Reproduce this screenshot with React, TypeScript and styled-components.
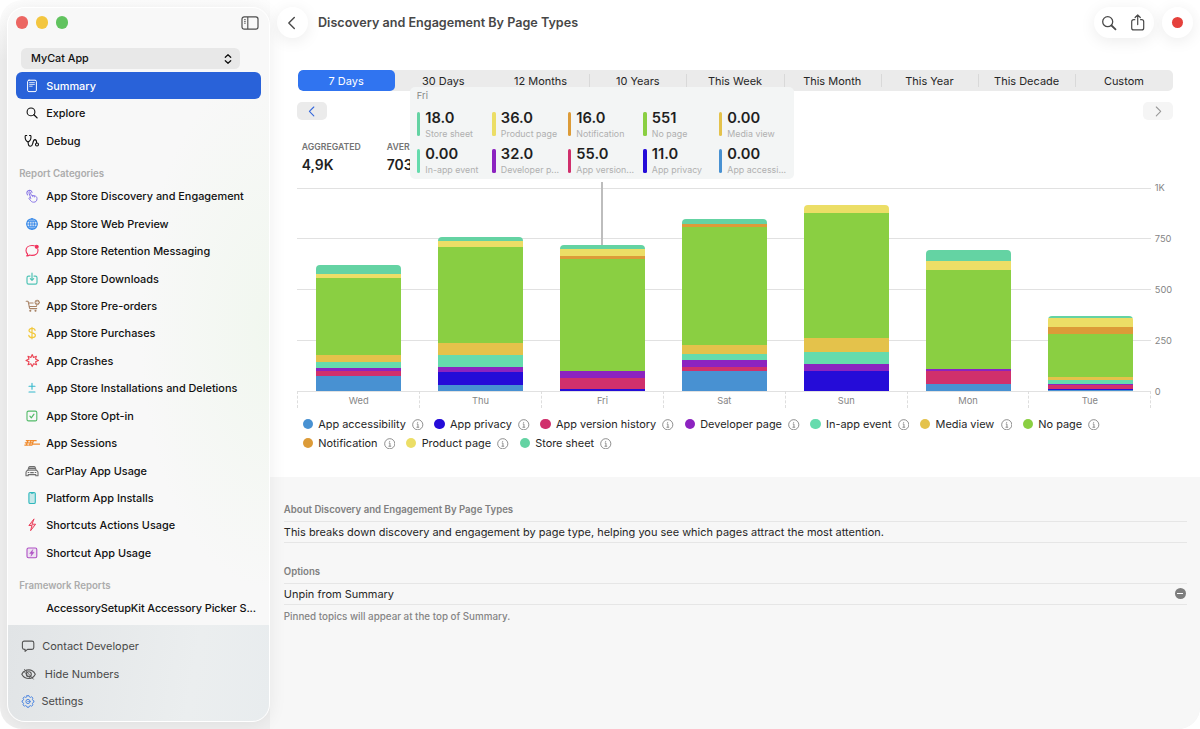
import React from 'react';
import styled, { createGlobalStyle, css } from 'styled-components';

const GlobalStyle = createGlobalStyle`
  * { box-sizing: border-box; }
  html, body { margin: 0; padding: 0; background: #fff; }
  body {
    font-family: Inter, "Liberation Sans", sans-serif;
    font-size: 10.97px;
    color: #262626;
    overflow: hidden;
    -webkit-font-smoothing: antialiased;
  }
`;

/* ---------- data ---------- */

const colors = {
  accessibility: '#4891d2',
  privacy: '#250cd8',
  version: '#d0306c',
  developer: '#8c23c0',
  inApp: '#65dbad',
  media: '#e4c24b',
  noPage: '#8acf42',
  notification: '#dc9b38',
  product: '#ecde66',
  store: '#64d3a3',
};

type Series = keyof typeof colors;

const days: { label: string; parts: [Series, number][] }[] = [
  { label: 'Wed', parts: [['store', 40], ['product', 20], ['noPage', 381], ['media', 33], ['inApp', 30], ['developer', 13], ['version', 26], ['accessibility', 75]] },
  { label: 'Thu', parts: [['store', 18], ['product', 30], ['noPage', 473], ['media', 57], ['inApp', 63], ['developer', 25], ['privacy', 62], ['accessibility', 30]] },
  { label: 'Fri', parts: [['store', 18], ['product', 36], ['notification', 16], ['noPage', 551], ['developer', 32], ['version', 55], ['privacy', 11]] },
  { label: 'Sat', parts: [['store', 22], ['notification', 17], ['noPage', 580], ['media', 43], ['inApp', 30], ['developer', 33], ['version', 21], ['accessibility', 99]] },
  { label: 'Sun', parts: [['product', 41], ['noPage', 613], ['media', 68], ['inApp', 58], ['developer', 34], ['privacy', 101]] },
  { label: 'Mon', parts: [['store', 54], ['product', 45], ['noPage', 487], ['developer', 10], ['version', 66], ['accessibility', 33]] },
  { label: 'Tue', parts: [['store', 14], ['product', 43], ['notification', 32], ['noPage', 213], ['media', 16], ['inApp', 17], ['developer', 9], ['version', 15], ['privacy', 5], ['accessibility', 8]] },
];

const readouts: [string, string, Series][] = [
  ['18.0', 'Store sheet', 'store'],
  ['36.0', 'Product page', 'product'],
  ['16.0', 'Notification', 'notification'],
  ['551', 'No page', 'noPage'],
  ['0.00', 'Media view', 'media'],
  ['0.00', 'In-app event', 'inApp'],
  ['32.0', 'Developer p...', 'developer'],
  ['55.0', 'App version...', 'version'],
  ['11.0', 'App privacy', 'privacy'],
  ['0.00', 'App accessi...', 'accessibility'],
];

const legendRows: [string, Series][][] = [
  [
    ['App accessibility', 'accessibility'],
    ['App privacy', 'privacy'],
    ['App version history', 'version'],
    ['Developer page', 'developer'],
    ['In-app event', 'inApp'],
    ['Media view', 'media'],
    ['No page', 'noPage'],
  ],
  [
    ['Notification', 'notification'],
    ['Product page', 'product'],
    ['Store sheet', 'store'],
  ],
];

const ranges = ['7 Days', '30 Days', '12 Months', '10 Years', 'This Week', 'This Month', 'This Year', 'This Decade', 'Custom'];

/* ---------- icons ---------- */

const Glyph = styled.svg<{ $w?: number }>`
  display: block;
  flex: none;
  width: ${(p) => p.$w ?? 16}px;
  height: 16px;
  fill: none;
  stroke: currentColor;
  stroke-width: 1.1;
  stroke-linecap: round;
  stroke-linejoin: round;
`;

const icons = {
  summary: (
    <Glyph viewBox="0 0 16 16">
      <rect x="3.6" y="2.2" width="8.8" height="11.4" rx="1.4" strokeWidth="1" />
      <path d="M5.6 4.6h4.8M5.6 6.4h4.8M5.6 8.2h2.6" strokeWidth=".8" />
    </Glyph>
  ),
  explore: (
    <Glyph viewBox="0 0 16 16">
      <circle cx="7" cy="6.9" r="3.9" />
      <path d="M9.9 9.8l3.2 3.1" strokeWidth="1.3" />
    </Glyph>
  ),
  debug: (
    <Glyph viewBox="0 0 16 16">
      <path d="M2.7 2.5H1.5c-.5 0-.5 3 .3 4.6C2.4 8.300 3 8.900 4 8.900s1.700-.6 2.300-1.800c.8-1.600.9-4.600.3-4.600H5.500" />
      <path d="M4.100 8.900c0 2.600.7 4.300 2.300 4.300 1.300 0 1.900-.9 2.300-2.600.4-2 .8-4 2.200-4 1.500 0 1.700 1.600 1.700 3.200" />
      <circle cx="13" cy="11.500" r="1.500" />
    </Glyph>
  ),
  tap: (
    <Glyph viewBox="0 0 16 16">
      <path d="M3.700 6.900a2.600 2.600 0 1 1 4.300-2.400" />
      <path d="M6.500 9.500L4.900 4.800c-.3-1 .9-1.400 1.300-.5l1.200 3 3.300.6c1.600.4 2.300 1.200 2.300 2.700 0 2.300-1.200 3.600-3.300 3.600-1.700 0-2.600-.8-3.400-2L5 10.600c-.4-.9.700-1.400 1.500-.4z" strokeWidth="1" />
      <path d="M8.700 7.700v1M10.400 8v1" strokeWidth=".9" />
    </Glyph>
  ),
  globe: (
    <Glyph viewBox="0 0 16 16">
      <circle cx="8" cy="8" r="5.300" fill="currentColor" fillOpacity=".18" />
      <ellipse cx="8" cy="8" rx="2.500" ry="5.300" strokeWidth=".8" />
      <path d="M8 2.700v10.600M2.800 8h10.400M3.500 5.300h9M3.500 10.700h9" strokeWidth=".8" />
    </Glyph>
  ),
  message: (
    <Glyph viewBox="0 0 16 16">
      <path d="M10.300 2.800C9.600 2.600 8.900 2.500 8 2.500 4.500 2.500 2 4.600 2 7.500c0 1.400.6 2.600 1.600 3.500 0 .8-.4 1.400-.9 1.900 1.200.1 2.200-.3 3-.9.700.3 1.500.4 2.300.4 3.500 0 6-2.100 6-4.900 0-.5-.1-.9-.2-1.400" />
      <circle cx="12.700" cy="3.700" r="1.500" fill="currentColor" />
    </Glyph>
  ),
  download: (
    <Glyph viewBox="0 0 16 16">
      <path d="M6 5.100H4.600c-1 0-1.600.6-1.600 1.600v4.900c0 1 .6 1.600 1.600 1.600h6.800c1 0 1.600-.6 1.600-1.600V6.700c0-1-.6-1.600-1.600-1.600H10" strokeWidth="1.200" />
      <path d="M8 2.200v7M6.300 7.700L8 9.400l1.700-1.700" strokeWidth="1.200" />
    </Glyph>
  ),
  cart: (
    <Glyph viewBox="0 0 16 16">
      <path d="M2.200 3.200h1.500c.3 0 .4.100.5.400l1.300 6.200c.1.500.4.800.9.800h6.300M4.500 5h4.600M5.100 8.500h7.200l.4-.9" />
      <circle cx="6.300" cy="12.800" r=".5" fill="currentColor" />
      <circle cx="11.500" cy="12.800" r=".5" fill="currentColor" />
      <circle cx="13.200" cy="4.400" r="2.300" fill="currentColor" strokeWidth=".6" />
      <path d="M13.200 3.100v2.600M11.900 4.400h2.600" stroke="#f8f8f8" strokeWidth=".8" />
    </Glyph>
  ),
  dollar: (
    <Glyph viewBox="0 0 16 16">
      <path d="M11.100 5.400c-.2-1.200-1.400-2-3.100-2-1.800 0-3 .8-3 2.200 0 3.200 6.400 1.300 6.400 4.700 0 1.500-1.300 2.400-3.300 2.400S5 11.800 4.800 10.400M8 2.400v11.400" strokeWidth="1.200" />
    </Glyph>
  ),
  crash: (
    <Glyph viewBox="0 0 16 16">
      <path d="M8.200 1.600l1.300 2.800 2.900-1.200-.9 2.900 3 1.400-2.900 1.300 1 3-3-1.100-1.400 2.900-1.300-2.900-2.900 1.100 1-3-3-1.300L5 6.100l-1-2.900 2.900 1.200z" />
    </Glyph>
  ),
  plusMinus: (
    <Glyph viewBox="0 0 16 16">
      <path d="M8 3.200v6M5 6.200h6M5 12h6" />
    </Glyph>
  ),
  check: (
    <Glyph viewBox="0 0 16 16">
      <rect x="3" y="3.100" width="9.800" height="9.800" rx="1.500" />
      <path d="M5.900 8.200l1.400 1.600 2.700-3.600" strokeWidth="1.200" />
    </Glyph>
  ),
  sessions: (
    <Glyph viewBox="0 0 16 16">
      <path d="M2.300 5.700h2.600M1.300 7.800h3.300M.8 10.100h2.900M6 5.700h2.500M5.600 7.900h2.600M4.800 10.100h3M9 5.700h3.200M8.800 9.200h7M3.900 5.700l-1.600 4.400M7 5.700l-1.400 4.400M9.400 5.700L8 10.100" strokeWidth="1.200" />
    </Glyph>
  ),
  car: (
    <Glyph viewBox="0 0 16 16">
      <path d="M3.900 7.200l.9-2.800c.2-.6.600-.9 1.200-.9h4c.6 0 1 .3 1.200.9l.9 2.800c1.300.4 1.900 1.200 1.900 2.400v3.200h-2.200v-1.200H4.200v1.200H2V9.600c0-1.200.6-2 1.900-2.400z" />
      <path d="M4.100 7.200h7.800" strokeWidth="1" />
      <path d="M5.600 5.400h4.800" strokeWidth="1.800" />
      <path d="M4.200 9.500h.6M11.200 9.500h.6M6.700 9.700h2.600" strokeWidth="1.200" />
    </Glyph>
  ),
  phone: (
    <Glyph viewBox="0 0 16 16">
      <rect x="4.900" y="2.500" width="6.400" height="11" rx="1.300" fill="currentColor" fillOpacity=".25" />
      <path d="M7.300 3.200h1.700" />
    </Glyph>
  ),
  bolt: (
    <Glyph viewBox="0 0 16 16">
      <path d="M9.800 2.200L4.900 8.500h3l-1.300 5.200 5-6.500H8.400z" fill="currentColor" fillOpacity=".25" strokeWidth="1" />
    </Glyph>
  ),
  boltBox: (
    <Glyph viewBox="0 0 16 16">
      <rect x="3" y="3" width="9.800" height="9.800" rx="1.500" fill="currentColor" fillOpacity=".12" />
      <path d="M8.700 4.700L5.600 8.500h2l-.7 2.800 3.200-4H8.200z" fill="currentColor" strokeWidth=".4" />
    </Glyph>
  ),
  bubble: (
    <Glyph viewBox="0 0 16 16">
      <path d="M4.200 3.100h7.800c1.100 0 1.800.7 1.800 1.800v4.700c0 1.100-.7 1.800-1.800 1.800H7.500l-2.400 2v-2h-.9c-1.100 0-1.800-.7-1.800-1.800V4.900c0-1.100.7-1.800 1.800-1.800z" />
    </Glyph>
  ),
  eyeOff: (
    <Glyph viewBox="0 0 16 16">
      <path d="M1.800 8.200C3.200 5.600 5.800 3.900 8.900 3.900s5 1.700 6.400 4.300c-1.400 2.600-3.600 4.300-6.400 4.300S3.200 10.800 1.800 8.200z" />
      <circle cx="8.800" cy="8.200" r="2.500" />
      <path d="M4.500 3.400l8.800 9.700M4.100 5.600l6.600 6.900" strokeWidth=".9" />
    </Glyph>
  ),
  gear: (
    <Glyph viewBox="0 0 16 16">
      <path d="M7 2.700h2l.4 1.200 1.100.5 1.100-.6 1.400 1.400-.6 1.100.5 1.100 1 .4v1.300l-1 .5-.5 1.100.6 1.100-1.400 1.400-1.100-.6-1.100.5-.4 1.100H7l-.4-1.100-1.100-.5-1.100.6L3 11.800l.6-1.100-.5-1.100-1-.5V7.800l1-.4.500-1.100L3 5.200l1.400-1.400 1.100.6 1.100-.5z" strokeWidth="1" />
      <circle cx="8" cy="8.500" r="2.100" strokeWidth="1" />
      <circle cx="8" cy="8.500" r=".3" strokeWidth=".6" />
    </Glyph>
  ),
};

/* ---------- window ---------- */

const Window = styled.div`
  display: flex;
  width: 1200px;
  height: 729px;
  overflow: hidden;
  border-radius: 22px;
  background: linear-gradient(#fdfdfd 0, #fafafa 22px, #efefef 60px);
`;

const Sidebar = styled.aside`
  position: relative;
  z-index: 1;
  display: flex;
  flex-direction: column;
  width: 263px;
  height: 715px;
  margin: 7px 0 0 7px;
  border-radius: 18px;
  border: 1px solid #fff;
  background: radial-gradient(ellipse 130px 260px at 100% 45%, #f1f7ef, #f8f8f8);
  box-shadow: 0 2px 18px rgba(0, 0, 0, 0.07);
  overflow: hidden;
`;

const TitleStrip = styled.div`
  display: flex;
  align-items: center;
  gap: 7.5px;
  height: 29px;
  padding: 0 10px 0 8px;
`;

const Light = styled.span<{ $color: string }>`
  width: 12.4px;
  height: 12.4px;
  border-radius: 50%;
  background: ${(p) => p.$color};
`;

const SidebarToggle = styled.svg`
  width: 18px;
  height: 14px;
  margin-left: auto;
  fill: none;
  stroke: #4d4d4d;
`;

const AppPicker = styled.div`
  display: flex;
  align-items: center;
  justify-content: space-between;
  height: 20.6px;
  margin: 11px 29px 3.4px 13px;
  padding: 1px 6px 0 10px;
  border-radius: 5.5px;
  background: #e8e8e8;
  color: #111;
  font-size: 10.8px;
  font-weight: 450;
`;

const NavItem = styled.div<{ $active?: boolean; $tight?: boolean }>`
  display: flex;
  align-items: center;
  flex: none;
  height: 27.45px;
  margin: 0 8px 0 7.5px;
  padding-left: 8px;
  border-radius: 6px;
  color: #111;
  font-size: 10.9px;
  font-weight: 450;
  letter-spacing: ${(p) => (p.$tight ? '-0.1px' : 'normal')};
  white-space: nowrap;
  ${(p) =>
    p.$active &&
    css`
      background: #2962d9;
      color: #fff;
      font-weight: 500;
    `}
`;

const NavIcon = styled.span<{ $color?: string }>`
  width: 16px;
  margin-right: 6.7px;
  color: ${(p) => p.$color ?? 'inherit'};
`;

const NavHeader = styled.div<{ $h: number }>`
  flex: none;
  height: ${(p) => p.$h}px;
  padding: ${(p) => p.$h - 14.5}px 0 0 11.2px;
  color: #acacac;
  font-size: 9.69px;
  font-weight: 600;
  line-height: 12px;
`;

const SidebarFooter = styled.div`
  display: flex;
  flex-direction: column;
  flex: 1;
  margin-top: 3.2px;
  padding: 7.5px 0 0 12px;
  background: linear-gradient(100deg, #e1e4e6, #ebeeef 70%, #e8ecee);
`;

const FooterItem = styled.div<{ $gap: number; $tint?: string }>`
  display: flex;
  align-items: center;
  gap: ${(p) => p.$gap}px;
  height: 27.7px;
  color: #4a4a4a;
  svg { color: ${(p) => p.$tint ?? '#555'}; }
`;

/* ---------- main column ---------- */

const Main = styled.main`
  display: flex;
  flex-direction: column;
  width: 930px;
`;

const ReportPane = styled.section`
  height: 477px;
  padding: 7px 0 0;
  background: #fff;
`;

const Toolbar = styled.header`
  display: flex;
  align-items: center;
  height: 31px;
  padding: 0 7px;
`;

const ToolGroup = styled.div<{ $w: number }>`
  display: flex;
  align-items: center;
  justify-content: center;
  gap: 11.5px;
  width: ${(p) => p.$w}px;
  height: 31px;
  margin-left: 8.5px;
  border-radius: 16px;
  background: #fff;
  box-shadow: 0 3px 16px rgba(0, 0, 0, 0.08);
  &:first-child { margin-left: 0; }
`;

const ToolIcon = styled.svg`
  width: 18px;
  height: 18px;
  fill: none;
  stroke: #4a4a4a;
  stroke-width: 1.3;
  stroke-linecap: round;
  stroke-linejoin: round;
`;

const RecordDot = styled.span`
  width: 11px;
  height: 11px;
  border-radius: 50%;
  background: #e5413c;
`;

const Title = styled.h1`
  flex: 1;
  margin: 0 0 0 10px;
  color: #474747;
  font-size: 12.6px;
  font-weight: 600;
`;

const Segments = styled.div`
  display: flex;
  height: 20.7px;
  margin: 32.3px 27.5px 0 27.5px;
  border-radius: 5px;
  background: #ebebeb;
  overflow: hidden;
`;

const Segment = styled.div<{ $active?: boolean }>`
  position: relative;
  flex: 1;
  border-radius: ${(p) => (p.$active ? '5px' : 0)};
  background: ${(p) => (p.$active ? '#3074f0' : 'transparent')};
  color: ${(p) => (p.$active ? '#fff' : '#262626')};
  line-height: 23px;
  text-align: center;
  & + & + &::before {
    content: '';
    position: absolute;
    left: 0;
    top: 4px;
    bottom: 4px;
    width: 1px;
    background: #d9d9d9;
  }
`;

const Pager = styled.div`
  display: flex;
  justify-content: space-between;
  padding: 11px 27.5px 0 27.3px;
`;

const PagerButton = styled.div<{ $muted?: boolean }>`
  display: grid;
  place-items: center;
  width: 29.5px;
  height: 18.5px;
  border-radius: 5px;
  background: ${(p) => (p.$muted ? '#f5f5f5' : '#ebebeb')};
  color: ${(p) => (p.$muted ? '#999' : '#3568dc')};
`;

const Stats = styled.div`
  display: flex;
  padding: 21px 0 0 31.8px;
`;

const Stat = styled.div`
  width: 85px;
`;

const StatLabel = styled.div`
  color: #757575;
  font-size: 8.7px;
  font-weight: 600;
  line-height: 12px;
`;

const StatValue = styled.div`
  margin-top: 3px;
  color: #1f1f1f;
  font-size: 13.9px;
  font-weight: 600;
  line-height: 18px;
`;

/* ---------- chart ---------- */

const Chart = styled.div`
  position: relative;
  display: grid;
  grid-template-columns: 854px 1fr;
  grid-template-rows: 203.5px 17px;
  margin: 13.2px 0 0 27.3px;
`;

const GridLines = styled.div`
  grid-area: 1 / 1;
  display: flex;
  flex-direction: column;
  justify-content: space-between;
  height: 204px;
`;

const GridLine = styled.div`
  height: 1px;
  background: #e1e1e1;
`;

const Bars = styled.div`
  grid-area: 1 / 1;
  display: flex;
  align-items: flex-end;
`;

const BarSlot = styled.div`
  display: flex;
  justify-content: center;
  flex: 1;
`;

const Bar = styled.div`
  width: 85.4px;
  border-radius: 4px 4px 0 0;
  overflow: hidden;
`;

const BarPart = styled.div<{ $color: string; $value: number }>`
  height: ${(p) => p.$value * 0.2035}px;
  background: ${(p) => p.$color};
`;

const DayLabels = styled.div`
  grid-area: 2 / 1;
  display: flex;
`;

const DayLabel = styled.div`
  flex: 1;
  border-left: 1px dashed #dedede;
  color: #858585;
  font-size: 9.3px;
  line-height: 20px;
  text-align: center;
  &:last-child { border-right: 1px dashed #dedede; }
`;

const Scale = styled.div`
  grid-area: 1 / 2;
  display: flex;
  flex-direction: column;
  justify-content: space-between;
  height: 216px;
  margin-top: -5.5px;
  padding-left: 3.5px;
  color: #858585;
  font-size: 9.3px;
  line-height: 12px;
`;

const Marker = styled.div`
  position: absolute;
  left: 304.2px;
  top: -6px;
  width: 2px;
  height: 63.5px;
  background: #bdbdbd;
`;

const Tooltip = styled.div`
  position: absolute;
  left: 113px;
  top: -100.7px;
  width: 384px;
  height: 92.2px;
  padding: 3.5px 0 0 6.5px;
  border-radius: 5px;
  background: #f3f5f5;
`;

const TooltipDay = styled.div`
  height: 12px;
  color: #858585;
  font-size: 9.3px;
  line-height: 12px;
`;

const Readouts = styled.div`
  display: grid;
  grid-template-columns: repeat(5, 75.5px);
  row-gap: 7.5px;
  padding-top: 6.5px;
`;

const Readout = styled.div<{ $color: string }>`
  position: relative;
  display: flex;
  flex-direction: column;
  height: 29px;
  padding-left: 8.5px;
  white-space: nowrap;
  &::before {
    content: '';
    position: absolute;
    left: 0;
    top: 3.5px;
    width: 3.5px;
    height: 24px;
    border-radius: 1.5px;
    background: ${(p) => p.$color};
  }
`;

const ReadoutValue = styled.strong`
  color: #1f1f1f;
  font-size: 14.7px;
  font-weight: 600;
  line-height: 19px;
`;

const ReadoutName = styled.span`
  color: #b0b0b0;
  font-size: 8.85px;
  line-height: 12px;
`;

const Legend = styled.div`
  padding: 6.6px 0 0 32.6px;
`;

const LegendRow = styled.div`
  display: flex;
  height: 19px;
`;

const LegendItem = styled.div`
  display: flex;
  align-items: center;
  margin-right: 10.7px;
  font-size: 10.93px;
  white-space: nowrap;
`;

const LegendDot = styled.span<{ $color: string }>`
  width: 10.4px;
  height: 10.4px;
  margin-right: 5.2px;
  border-radius: 50%;
  background: ${(p) => p.$color};
`;

const InfoIcon = styled.svg`
  width: 11.5px;
  height: 11.5px;
  margin-left: 6.3px;
  fill: none;
  stroke: #7d7d7d;
  stroke-width: 0.9;
`;

/* ---------- details ---------- */

const Details = styled.section`
  height: 252px;
  padding: 26px 13.5px 0 13.8px;
  background: #f7f7f7;
`;

const SectionTitle = styled.h2`
  margin: 0;
  height: 18px;
  color: #808080;
  font-size: 9.63px;
  font-weight: 600;
  line-height: 14px;
`;

const DetailRow = styled.div`
  display: flex;
  align-items: center;
  justify-content: space-between;
  height: 21.5px;
  margin-bottom: 22.5px;
  padding-right: 1px;
  border: solid #e6e6e6;
  border-width: 1px 0;
`;

const OptionRow = styled(DetailRow)`
  margin-bottom: 4.5px;
`;

const Note = styled.p`
  margin: 0;
  color: #858585;
  font-size: 9.8px;
  font-weight: 500;
  line-height: 16px;
`;

const MinusBadge = styled.span`
  display: grid;
  place-items: center;
  width: 11px;
  height: 11px;
  border-radius: 50%;
  background: #7e7e7e;
  &::after {
    content: '';
    width: 6px;
    height: 1.2px;
    background: #fff;
  }
`;

const topItems: [keyof typeof icons, string][] = [
  ['summary', 'Summary'],
  ['explore', 'Explore'],
  ['debug', 'Debug'],
];

const categories: [keyof typeof icons, string, string][] = [
  ['tap', '#8a78e6', 'App Store Discovery and Engagement'],
  ['globe', '#3287e8', 'App Store Web Preview'],
  ['message', '#f0315b', 'App Store Retention Messaging'],
  ['download', '#50c4b6', 'App Store Downloads'],
  ['cart', '#a98467', 'App Store Pre-orders'],
  ['dollar', '#f2c83c', 'App Store Purchases'],
  ['crash', '#ea4453', 'App Crashes'],
  ['plusMinus', '#35b8cc', 'App Store Installations and Deletions'],
  ['check', '#52ba68', 'App Store Opt-in'],
  ['sessions', '#f08a2c', 'App Sessions'],
  ['car', '#6d6d6d', 'CarPlay App Usage'],
  ['phone', '#2fb8bd', 'Platform App Installs'],
  ['bolt', '#ea3f5a', 'Shortcuts Actions Usage'],
  ['boltBox', '#ae4fc4', 'Shortcut App Usage'],
];

export default function App() {
  return (
    <>
      <GlobalStyle />
      <Window>
        <Sidebar>
          <TitleStrip>
            <Light $color="#ec6662" />
            <Light $color="#f3c63f" />
            <Light $color="#61c35f" />
            <SidebarToggle viewBox="0 0 18 14">
              <rect x="1" y=".8" width="16" height="12.4" rx="2.2" strokeWidth="1.2" />
              <path d="M6.8 1v12" strokeWidth="1.1" />
              <path d="M3 3.6h1.800M3 5.400h1.800M3 7.200h1.800" strokeWidth=".8" />
            </SidebarToggle>
          </TitleStrip>
          <AppPicker>
            MyCat App
            <Glyph viewBox="0 0 12 16" $w={12}>
              <path d="M3.300 6.300L6 3.800l2.700 2.500M3.300 9.700L6 12.200l2.700-2.500" strokeWidth="1.3" />
            </Glyph>
          </AppPicker>
          {topItems.map(([icon, label], i) => (
            <NavItem key={label} $active={i === 0}>
              <NavIcon>{icons[icon]}</NavIcon>
              {label}
            </NavItem>
          ))}
          <NavHeader $h={28.2}>Report Categories</NavHeader>
          {categories.map(([icon, color, label]) => (
            <NavItem key={label}>
              <NavIcon $color={color}>{icons[icon]}</NavIcon>
              {label}
            </NavItem>
          ))}
          <NavHeader $h={27.5}>Framework Reports</NavHeader>
          <NavItem $tight>
            <NavIcon />
            AccessorySetupKit Accessory Picker S...
          </NavItem>
          <SidebarFooter>
            <FooterItem $gap={6.2}>{icons.bubble}Contact Developer</FooterItem>
            <FooterItem $gap={8.8}>{icons.eyeOff}Hide Numbers</FooterItem>
            <FooterItem $gap={5.4} $tint="#4d86e0">{icons.gear}Settings</FooterItem>
          </SidebarFooter>
        </Sidebar>

        <Main>
          <ReportPane>
            <Toolbar>
              <ToolGroup $w={31}>
                <ToolIcon viewBox="0 0 18 18">
                  <path d="M10.300 3.500L4.800 9l5.500 5.500" strokeWidth="1.4" />
                </ToolIcon>
              </ToolGroup>
              <Title>Discovery and Engagement By Page Types</Title>
              <ToolGroup $w={60}>
                <ToolIcon viewBox="0 0 18 18">
                  <circle cx="7.700" cy="7.700" r="5" />
                  <path d="M11.500 11.500l4 3.900" strokeWidth="1.8" />
                </ToolIcon>
                <ToolIcon viewBox="0 0 18 18">
                  <path d="M5.800 5.700H4.700c-1.300 0-2 .7-2 2v6.200c0 1.300.7 2 2 2h8c1.300 0 2-.7 2-2V7.700c0-1.300-.7-2-2-2h-1.100M8.700 10.600V1.100M6.100 3.500L8.700 1l2.600 2.500" strokeWidth="1.2" />
                </ToolIcon>
              </ToolGroup>
              <ToolGroup $w={31}>
                <RecordDot />
              </ToolGroup>
            </Toolbar>

            <Segments>
              {ranges.map((range, i) => (
                <Segment key={range} $active={i === 0}>{range}</Segment>
              ))}
            </Segments>

            <Pager>
              <PagerButton>
                <Glyph viewBox="0 0 16 16">
                  <path d="M9.800 4L5.400 8.400l4.400 4.400" />
                </Glyph>
              </PagerButton>
              <PagerButton $muted>
                <Glyph viewBox="0 0 16 16">
                  <path d="M6.300 4l4.400 4.400-4.400 4.400" />
                </Glyph>
              </PagerButton>
            </Pager>

            <Stats>
              <Stat>
                <StatLabel>AGGREGATED</StatLabel>
                <StatValue>4,9K</StatValue>
              </Stat>
              <Stat>
                <StatLabel>AVERAGE</StatLabel>
                <StatValue>703</StatValue>
              </Stat>
            </Stats>

            <Chart>
              <GridLines>
                {[0, 1, 2, 3, 4].map((n) => <GridLine key={n} />)}
              </GridLines>
              <Bars>
                {days.map((day) => (
                  <BarSlot key={day.label}>
                    <Bar>
                      {day.parts.map(([name, value]) => (
                        <BarPart key={name} $color={colors[name]} $value={value} />
                      ))}
                    </Bar>
                  </BarSlot>
                ))}
              </Bars>
              <Scale>
                {['1K', '750', '500', '250', '0'].map((tick) => <span key={tick}>{tick}</span>)}
              </Scale>
              <DayLabels>
                {days.map((day) => <DayLabel key={day.label}>{day.label}</DayLabel>)}
              </DayLabels>
              <Marker />
              <Tooltip>
                <TooltipDay>Fri</TooltipDay>
                <Readouts>
                  {readouts.map(([value, name, series]) => (
                    <Readout key={name} $color={colors[series]}>
                      <ReadoutValue>{value}</ReadoutValue>
                      <ReadoutName>{name}</ReadoutName>
                    </Readout>
                  ))}
                </Readouts>
              </Tooltip>
            </Chart>

            <Legend>
              {legendRows.map((row, i) => (
                <LegendRow key={i}>
                  {row.map(([label, series]) => (
                    <LegendItem key={label}>
                      <LegendDot $color={colors[series]} />
                      {label}
                      <InfoIcon viewBox="0 0 12 12">
                        <circle cx="6" cy="6" r="5.300" />
                        <path d="M5 5.200h1.200v3.300M4.700 8.600h2.800M5.900 3.100v.9" />
                      </InfoIcon>
                    </LegendItem>
                  ))}
                </LegendRow>
              ))}
            </Legend>
          </ReportPane>

          <Details>
            <SectionTitle>About Discovery and Engagement By Page Types</SectionTitle>
            <DetailRow>
              This breaks down discovery and engagement by page type, helping you see which pages attract the most attention.
            </DetailRow>
            <SectionTitle>Options</SectionTitle>
            <OptionRow>
              Unpin from Summary
              <MinusBadge />
            </OptionRow>
            <Note>Pinned topics will appear at the top of Summary.</Note>
          </Details>
        </Main>
      </Window>
    </>
  );
}
